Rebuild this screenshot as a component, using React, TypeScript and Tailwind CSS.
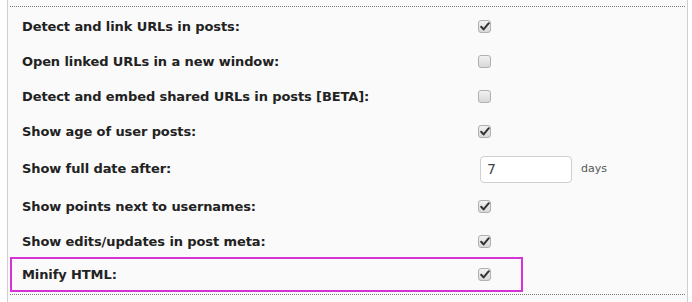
import React from "react";

interface Setting {
  label: string;
  kind: "check" | "number";
  checked?: boolean;
  value?: string;
}

const settings: Setting[] = [
  { label: "Detect and link URLs in posts:", kind: "check", checked: true },
  { label: "Open linked URLs in a new window:", kind: "check", checked: false },
  { label: "Detect and embed shared URLs in posts [BETA]:", kind: "check", checked: false },
  { label: "Show age of user posts:", kind: "check", checked: true },
  { label: "Show full date after:", kind: "number", value: "7" },
  { label: "Show points next to usernames:", kind: "check", checked: true },
  { label: "Show edits/updates in post meta:", kind: "check", checked: true },
];

function Checkbox({ checked }: { checked?: boolean }) {
  return (
    <span className="flex h-[13px] w-[13px] items-center justify-center rounded-[3px] border border-[#b0b0b0] bg-gradient-to-b from-[#f2f2f2] to-[#d8d8d8]">
      {checked && (
        <svg width="10" height="9" viewBox="0 0 10 9">
          <path d="M1.2 4.8 L3.6 7.4 L8.8 1.2" fill="none" stroke="#333" strokeWidth="2" strokeLinecap="round" strokeLinejoin="round" />
        </svg>
      )}
    </span>
  );
}

function Row({ s, tall }: { s: Setting; tall?: boolean }) {
  return (
    <div className={`flex items-center ${tall ? "h-[40px]" : "h-[35px]"}`}>
      <div className="w-[468px] pl-[12px] text-[13px] font-bold tracking-[-0.1px] text-[#222]">{s.label}</div>
      {s.kind === "check" ? (
        <Checkbox checked={s.checked} />
      ) : (
        <div className="ml-[2px] flex items-center">
          <input
            readOnly
            value={s.value}
            className="h-[27px] w-[92px] rounded-[4px] border border-[#cfcfcf] bg-white px-[6px] text-[14px] text-[#444] outline-none"
          />
          <span className="ml-[9px] text-[11px] text-[#555]">days</span>
        </div>
      )}
    </div>
  );
}

export default function App() {
  return (
    <div className="h-[302px] w-[692px] bg-white font-['DejaVu_Sans',Verdana,sans-serif]">
      <div className="ml-[7px] h-full w-[681px] border-x border-[#cfcfcf] bg-[#fafafa] pt-[6px]">
        <div className="mx-[2px] border-y border-dotted border-[#777] pt-[2px] pb-[2px]">
          {settings.map((s) => (
            <Row key={s.label} s={s} tall={s.kind === "number"} />
          ))}
          <div className="-mt-[2px] w-[513px] border-2 border-[#d633d6]">
            <div className="-ml-[2px] -my-[2px]">
              <Row s={{ label: "Minify HTML:", kind: "check", checked: true }} />
            </div>
          </div>
        </div>
      </div>
    </div>
  );
}
